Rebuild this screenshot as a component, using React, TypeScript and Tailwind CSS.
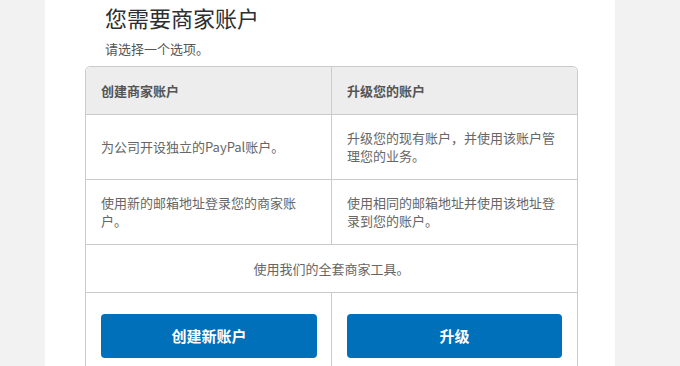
import React from "react";

const font = {
  fontFamily: '"Noto Sans CJK SC", "Liberation Sans", sans-serif',
};

export default function App() {
  return (
    <div className="min-h-screen bg-[#f2f2f2] flex" style={font}>
      <div className="ml-[45px] w-[570px] h-[366px] bg-white overflow-hidden">
        {/* Heading */}
        <div className="pl-[60px]">
          <h1 className="text-[22px] leading-[32px] text-[#2c2e2f] pt-[1px]">
            您需要商家账户
          </h1>
          <p className="text-[13px] leading-[20px] text-[#555] mt-[6px]">
            请选择一个选项。
          </p>
        </div>

        {/* Options table */}
        <div className="ml-[40px] mt-[7px] w-[493px] border border-[#cbcbcb] rounded-t-[5px] text-[13px] leading-[18px] text-[#666]">
          <div className="grid grid-cols-[246px_1fr] bg-[#ededed] rounded-t-[5px] border-b border-[#cbcbcb] h-[48px]">
            <div className="flex items-center pl-[15px] border-r border-[#cbcbcb] font-semibold text-[#555]">
              创建商家账户
            </div>
            <div className="flex items-center pl-[15px] font-semibold text-[#555]">
              升级您的账户
            </div>
          </div>

          <div className="grid grid-cols-[246px_1fr] border-b border-[#cbcbcb] h-[65px]">
            <div className="flex items-center pl-[15px] pr-[30px] border-r border-[#cbcbcb]">
              为公司开设独立的PayPal账户。
            </div>
            <div className="flex items-center pl-[15px] pr-[20px]">
              升级您的现有账户，并使用该账户管理您的业务。
            </div>
          </div>

          <div className="grid grid-cols-[246px_1fr] border-b border-[#cbcbcb] h-[65px]">
            <div className="flex items-center pl-[15px] pr-[30px] border-r border-[#cbcbcb]">
              使用新的邮箱地址登录您的商家账户。
            </div>
            <div className="flex items-center pl-[15px] pr-[20px]">
              使用相同的邮箱地址并使用该地址登录到您的账户。
            </div>
          </div>

          <div className="flex items-center justify-center border-b border-[#cbcbcb] h-[48px]">
            使用我们的全套商家工具。
          </div>

          <div className="grid grid-cols-[246px_1fr] h-[80px]">
            <div className="pt-[21px] pl-[15px] pr-[14px] border-r border-[#cbcbcb]">
              <button className="w-full h-[44px] rounded-[4px] bg-[#0070ba] text-white text-[15px] font-bold">
                创建新账户
              </button>
            </div>
            <div className="pt-[21px] pl-[15px] pr-[15px]">
              <button className="w-full h-[44px] rounded-[4px] bg-[#0070ba] text-white text-[15px] font-bold">
                升级
              </button>
            </div>
          </div>
        </div>
      </div>
    </div>
  );
}
